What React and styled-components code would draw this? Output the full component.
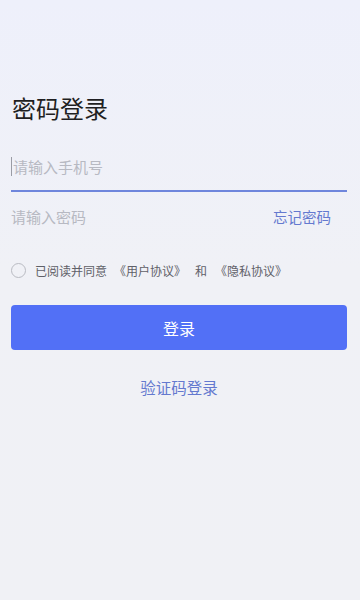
import React from "react";
import styled, { createGlobalStyle } from "styled-components";

const GlobalStyle = createGlobalStyle`
  html, body {
    margin: 0;
    padding: 0;
  }
  body {
    font-family: "Noto Sans CJK SC", "Noto Sans", sans-serif;
    background: #f0f1f5;
  }
`;

const Page = styled.div`
  min-height: 600px;
  box-sizing: border-box;
  padding: 92px 13px 0 11px;
  background: linear-gradient(180deg, #eef0fb 0%, #f0f1f6 45%, #f0f1f5 100%);
  display: flex;
  flex-direction: column;
`;

const Title = styled.h1`
  margin: 0 0 18px 1px;
  font-size: 24px;
  line-height: 32px;
  font-weight: 400;
  color: #1f1f22;
`;

const Field = styled.div`
  height: 50px;
  display: flex;
  align-items: center;
  justify-content: space-between;
  box-sizing: border-box;
  border-bottom: 2px solid ${(p) => (p.$active ? "#6f86dc" : "transparent")};
`;

const InputText = styled.div`
  display: flex;
  align-items: center;
  font-size: 15px;
  color: #b7b9c2;
`;

const Caret = styled.span`
  width: 1px;
  height: 19px;
  background: #9a9ca5;
  margin-right: 1px;
`;

const Link = styled.span`
  font-size: 14.5px;
  color: #6479cf;
  margin-right: 16px;
  cursor: pointer;
`;

const Agree = styled.div`
  margin-top: 18px;
  height: 20px;
  display: flex;
  align-items: center;
  font-size: 12px;
  color: #5f6068;
`;

const Radio = styled.span`
  width: 15px;
  height: 15px;
  border-radius: 50%;
  border: 1px solid #b9bbc2;
  box-sizing: border-box;
  margin-right: 9px;
  flex: none;
`;

const Doc = styled.span`
  margin-left: ${(p) => p.$gap}px;
`;

const Button = styled.button`
  margin-top: 25px;
  height: 45px;
  border: none;
  border-radius: 4px;
  background: #5270f6;
  color: #fff;
  font-family: inherit;
  font-size: 16px;
  cursor: pointer;
`;

const SwitchLink = styled.div`
  margin-top: 26px;
  line-height: 22px;
  text-align: center;
  font-size: 15.5px;
  color: #6479cf;
`;

export default function App() {
  return (
    <>
      <GlobalStyle />
      <Page>
        <Title>密码登录</Title>
        <Field $active>
          <InputText>
            <Caret />
            请输入手机号
          </InputText>
        </Field>
        <Field>
          <InputText>请输入密码</InputText>
          <Link>忘记密码</Link>
        </Field>
        <Agree>
          <Radio />
          <span>已阅读并同意</span>
          <Doc $gap={7}>《用户协议》</Doc>
          <Doc $gap={9}>和</Doc>
          <Doc $gap={8}>《隐私协议》</Doc>
        </Agree>
        <Button>登录</Button>
        <SwitchLink>验证码登录</SwitchLink>
      </Page>
    </>
  );
}
